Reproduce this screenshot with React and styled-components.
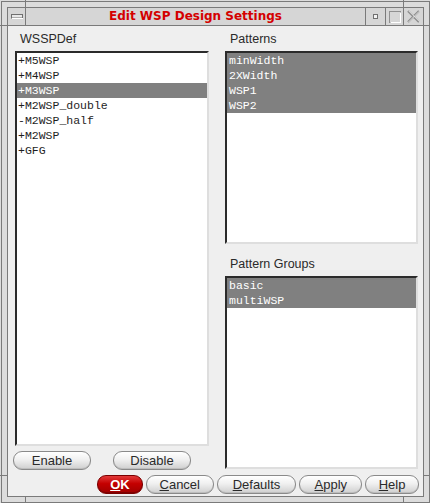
import React from 'react';
import styled, { createGlobalStyle, css } from 'styled-components';

const Global = createGlobalStyle`
  html, body {
    margin: 0;
    padding: 0;
    background: #dcdcdc;
  }
  * {
    box-sizing: border-box;
  }
`;

const line = '#7a7a7a';

const Window = styled.div`
  position: relative;
  width: 430px;
  height: 503px;
  padding: 1px 0 0 1px;
  background: #dcdcdc;
`;

const Frame = styled.div`
  height: 100%;
  border: 1px solid ${line};
  padding: 5px;
`;

const Inner = styled.div`
  height: 100%;
  border: 1px solid ${line};
  display: flex;
  flex-direction: column;
  background: #efefef;
`;

const Mark = styled.div`
  position: absolute;
  background: ${line};
  ${(p) => p.$v ? css`width: 1px; height: 7px;` : css`width: 7px; height: 1px;`}
`;

const TitleBar = styled.div`
  display: flex;
  height: 18px;
  background: #d6d6d6;
  border-bottom: 1px solid ${line};
`;

const Cell = styled.div`
  width: ${(p) => p.$w}px;
  display: flex;
  align-items: center;
  justify-content: center;
  border-left: ${(p) => (p.$first ? 'none' : `1px solid ${line}`)};
  border-right: ${(p) => (p.$first ? `1px solid ${line}` : 'none')};
`;

const Title = styled.div`
  flex: 1;
  text-align: center;
  font-family: "DejaVu Sans", sans-serif;
  font-weight: bold;
  font-size: 12px;
  line-height: 17px;
  color: #d40000;
`;

const Content = styled.div`
  flex: 1;
  display: flex;
  flex-direction: column;
  padding: 0 4px 1px 7px;
`;

const Main = styled.div`
  flex: 1;
  display: grid;
  grid-template-columns: 194px 193px;
  column-gap: 16px;
`;

const Column = styled.div`
  display: flex;
  flex-direction: column;
`;

const Label = styled.div`
  height: ${(p) => p.$h || 25}px;
  padding: 0 0 5px 5px;
  display: flex;
  align-items: flex-end;
  font-family: "Liberation Sans", Arial, sans-serif;
  font-size: 12.5px;
  color: #2a2a2a;
`;

const List = styled.div`
  ${(p) => (p.$h ? `height: ${p.$h}px;` : 'flex: 1;')}
  background: #fff;
  border-top: 2px solid #2b2b2b;
  border-left: 2px solid #2b2b2b;
  border-right: 2px solid #dedede;
  border-bottom: 2px solid #dedede;
  overflow: hidden;
`;

const Item = styled.div`
  height: 15px;
  line-height: 15px;
  padding-left: ${(p) => p.$pl || 1}px;
  font-family: "Liberation Mono", "DejaVu Sans Mono", monospace;
  font-size: 11.5px;
  white-space: pre;
  color: ${(p) => (p.$sel ? '#fff' : '#1e1e1e')};
  background: ${(p) => (p.$sel ? '#808080' : 'transparent')};
`;

const Row = styled.div`
  display: flex;
  gap: 22px;
  margin: 5px 0 0 -2px;
  height: 19px;
`;

const Button = styled.button`
  width: ${(p) => p.$w}px;
  height: 19px;
  padding: 0;
  border: 1px solid #8a8a8a;
  border-radius: 9px;
  background: linear-gradient(#ffffff, #f0f0f0 45%, #cfcfcf);
  box-shadow: inset 0 -1px 0 #bdbdbd;
  font-family: "Liberation Sans", Arial, sans-serif;
  font-size: 13px;
  color: #2a2a2a;
  line-height: 16px;
  u {
    text-decoration: underline;
    text-underline-offset: 1px;
  }
`;

const OkButton = styled(Button)`
  border-color: #7a0000;
  background: linear-gradient(#e23a3a, #c40000 45%, #a00000);
  box-shadow: inset 0 -1px 0 #800000;
  color: #fff;
  font-weight: bold;
`;

const Footer = styled.div`
  display: flex;
  gap: 3px;
  padding-left: 82px;
  margin-top: 5px;
  margin-bottom: 1px;
  height: 19px;
`;

const wsspItems = ['+M5WSP', '+M4WSP', '+M3WSP', '+M2WSP_double', '-M2WSP_half', '+M2WSP', '+GFG'];
const patterns = ['minWidth', '2XWidth', 'WSP1', 'WSP2'];
const groups = ['basic', 'multiWSP'];

const MenuIcon = () => (
  <svg width="12" height="5" viewBox="0 0 12 5">
    <rect x="0.5" y="0.5" width="11" height="3.5" fill="#e8e8e8" stroke="#707070" />
    <line x1="1" y1="4.5" x2="12" y2="4.5" stroke="#fff" />
  </svg>
);

const MinIcon = () => (
  <svg width="5" height="5" viewBox="0 0 5 5">
    <rect x="0.5" y="0.5" width="4" height="4" fill="#f4f4f4" stroke="#707070" />
  </svg>
);

const MaxIcon = () => (
  <svg width="12" height="12" viewBox="0 0 12 12">
    <rect x="0.5" y="0.5" width="11" height="11" fill="none" stroke="#909090" />
    <path d="M1.5 11.5h10.5M11.5 1.5v10" stroke="#fff" />
  </svg>
);

const CloseIcon = () => (
  <svg width="13" height="13" viewBox="0 0 13 13">
    <path d="M1 1l11 11M12 1L1 12" stroke="#8c8c8c" strokeWidth="2.2" />
    <path d="M1.6 0.8l11 11M12.4 1.2L1.4 12.2" stroke="#f6f6f6" strokeWidth="0.8" />
  </svg>
);

export default function App() {
  return (
    <Window>
      <Global />
      <Mark $v style={{ left: 25, top: 0 }} />
      <Mark $v style={{ left: 403, top: 0 }} />
      <Mark $v style={{ left: 25, top: 496 }} />
      <Mark $v style={{ left: 403, top: 496 }} />
      <Mark style={{ left: 0, top: 25 }} />
      <Mark style={{ left: 423, top: 25 }} />
      <Mark style={{ left: 0, top: 475 }} />
      <Mark style={{ left: 423, top: 475 }} />
      <Frame>
        <Inner>
          <TitleBar>
            <Cell $w={18} $first><MenuIcon /></Cell>
            <Title>Edit WSP Design Settings</Title>
            <Cell $w={20}><MinIcon /></Cell>
            <Cell $w={18}><MaxIcon /></Cell>
            <Cell $w={20}><CloseIcon /></Cell>
          </TitleBar>
          <Content>
            <Main>
              <Column>
                <Label>WSSPDef</Label>
                <List>
                  {wsspItems.map((t) => (
                    <Item key={t} $sel={t === '+M3WSP'}>{t}</Item>
                  ))}
                </List>
                <Row>
                  <Button $w={78}>Enable</Button>
                  <Button $w={78}>Disable</Button>
                </Row>
              </Column>
              <Column>
                <Label>Patterns</Label>
                <List $h={193}>
                  {patterns.map((t) => (
                    <Item key={t} $sel $pl={2}>{t}</Item>
                  ))}
                </List>
                <Label $h={32}>Pattern Groups</Label>
                <List $h={193}>
                  {groups.map((t) => (
                    <Item key={t} $sel $pl={2}>{t}</Item>
                  ))}
                </List>
              </Column>
            </Main>
            <Footer>
              <OkButton $w={46}><u>O</u>K</OkButton>
              <Button $w={68}><u>C</u>ancel</Button>
              <Button $w={80}><u>D</u>efaults</Button>
              <Button $w={63}><u>A</u>pply</Button>
              <Button $w={54}><u>H</u>elp</Button>
            </Footer>
          </Content>
        </Inner>
      </Frame>
    </Window>
  );
}
